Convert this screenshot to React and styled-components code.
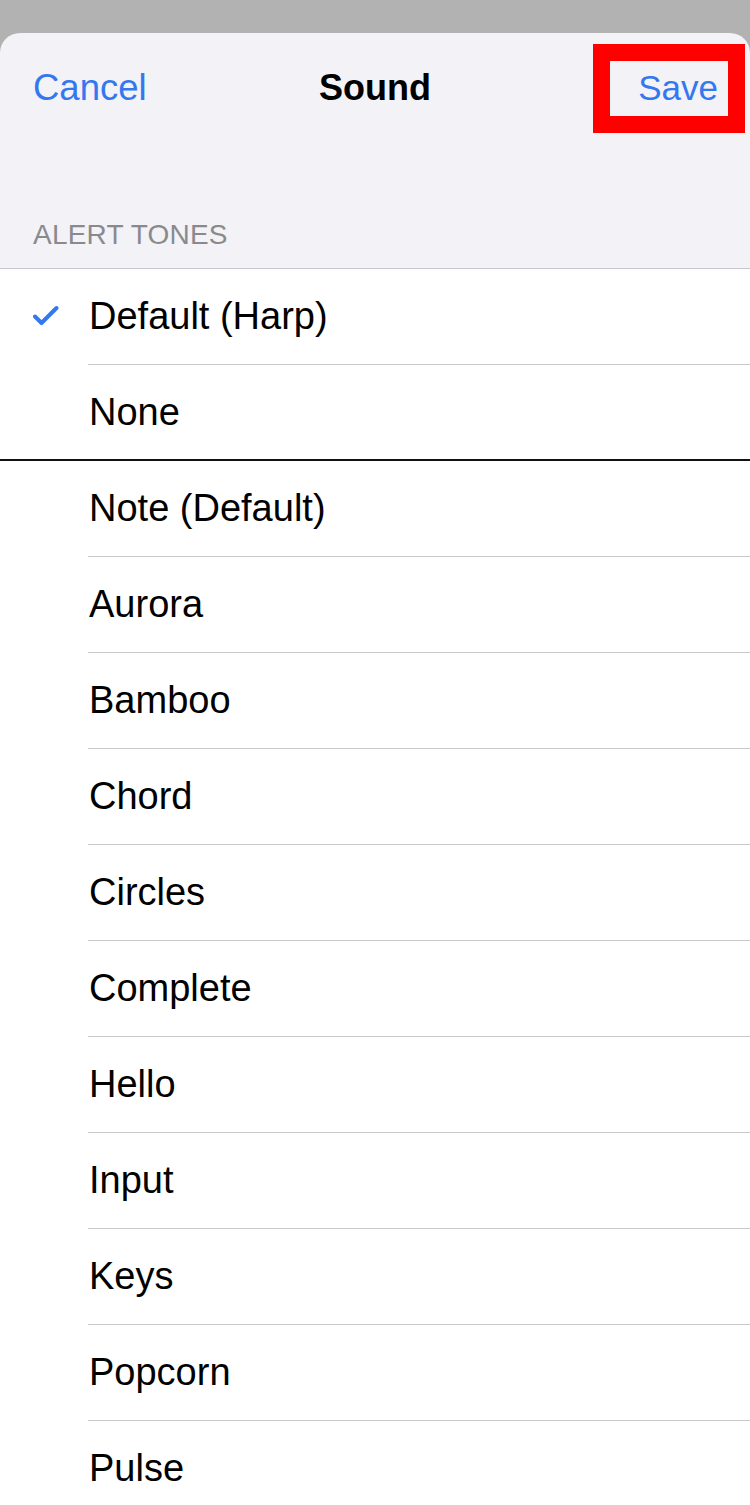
import React from 'react'
import styled, {createGlobalStyle} from 'styled-components'

const Global = createGlobalStyle`
    html, body {
        margin: 0;
        padding: 0;
        background: #b2b2b2;
    }
    body {
        font-family: 'Liberation Sans', Arial, sans-serif;
        -webkit-font-smoothing: antialiased;
    }
`

const Page = styled.div`
    width: 750px;
    height: 1505px;
    overflow: hidden;
    padding-top: 33px;
    box-sizing: border-box;
    background: #b2b2b2;
`

const Sheet = styled.div`
    background: #f2f2f7;
    border-radius: 20px 20px 0 0;
    height: 100%;
    overflow: hidden;
`

const NavBar = styled.nav`
    height: 110px;
    display: grid;
    grid-template-columns: 1fr auto 1fr;
    align-items: center;
`

const NavButton = styled.button`
    background: none;
    border: none;
    padding: 0;
    font-family: inherit;
    font-size: 36.5px;
    color: #3478f0;
    justify-self: start;
    margin-left: 33px;
    cursor: pointer;
`

const Title = styled.h1`
    margin: 0;
    font-size: 36px;
    font-weight: 700;
    color: #000;
`

const Highlight = styled.div`
    justify-self: end;
    margin-right: 5px;
    border: 17px solid #ff0000;
    width: 108px;
    height: 55px;
    display: flex;
    align-items: center;
    justify-content: flex-end;
    padding-right: 10px;
    box-sizing: content-box;
`

const SaveButton = styled(NavButton)`
    justify-self: auto;
    margin-left: 0;
    font-size: 35px;
`

const SectionHeader = styled.div`
    height: 125px;
    display: flex;
    align-items: flex-end;
    padding: 0 0 17px 33px;
    box-sizing: border-box;
    font-size: 28px;
    color: #8a8a8e;
    letter-spacing: 0.2px;
`

const List = styled.ul`
    list-style: none;
    margin: 0;
    padding: 0;
    background: #fff;
    border-top: 1px solid #c8c7cc;
`

const Row = styled.li`
    display: flex;
    height: 96px;
    box-sizing: border-box;
    border-bottom: ${p => (p.$divider ? '2px solid #111' : 'none')};
`

const Gutter = styled.div`
    width: 88px;
    flex: none;
    display: flex;
    align-items: center;
    padding-left: 33px;
    padding-bottom: 2px;
    box-sizing: border-box;
`

const Label = styled.div`
    flex: 1;
    display: flex;
    align-items: center;
    padding-left: 1px;
    font-size: 38px;
    color: #000;
    border-bottom: ${p => (p.$last ? 'none' : '1px solid #c8c7cc')};
`

const Check = () => (
    <svg width="26" height="22" viewBox="0 0 26 22" fill="none">
        <path d="M2 11.5 L8.5 18 L23.5 3" stroke="#3478f0" strokeWidth="4" strokeLinecap="round" strokeLinejoin="round" />
    </svg>
)

const tones = [
    'Note (Default)', 'Aurora', 'Bamboo', 'Chord', 'Circles', 'Complete',
    'Hello', 'Input', 'Keys', 'Popcorn', 'Pulse',
]

export default function App() {
    return (
        <Page>
            <Global />
            <Sheet>
                <NavBar>
                    <NavButton>Cancel</NavButton>
                    <Title>Sound</Title>
                    <Highlight>
                        <SaveButton>Save</SaveButton>
                    </Highlight>
                </NavBar>
                <SectionHeader>ALERT TONES</SectionHeader>
                <List>
                    <Row>
                        <Gutter><Check /></Gutter>
                        <Label>Default (Harp)</Label>
                    </Row>
                    <Row $divider>
                        <Gutter />
                        <Label $last>None</Label>
                    </Row>
                    {tones.map(t => (
                        <Row key={t}>
                            <Gutter />
                            <Label>{t}</Label>
                        </Row>
                    ))}
                </List>
            </Sheet>
        </Page>
    )
}
